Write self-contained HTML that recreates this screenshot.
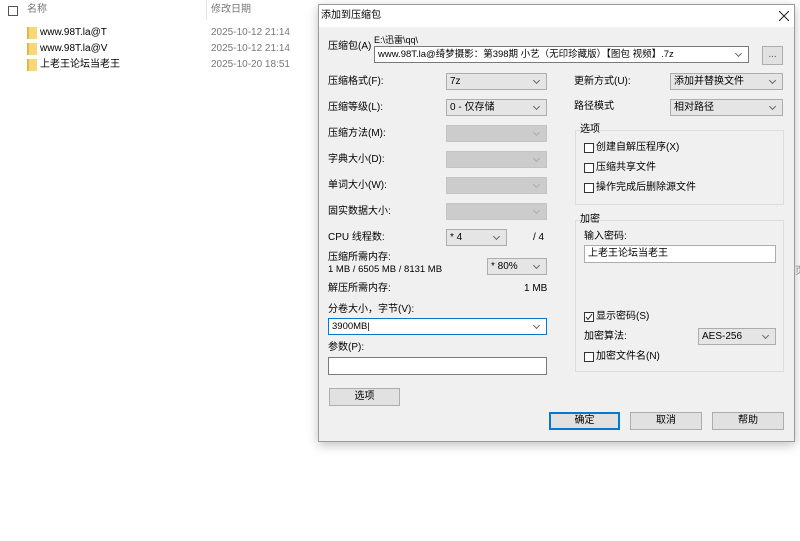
<!DOCTYPE html>
<html><head><meta charset="utf-8">
<style>
*{margin:0;padding:0;box-sizing:border-box}
body{width:800px;height:541px;background:#fff;position:relative;overflow:hidden;font-family:"Liberation Sans","Noto Sans CJK SC",sans-serif;font-size:10px;color:#000}
.a{position:absolute;white-space:nowrap;line-height:12px}
.g{color:#777}
.dlg{position:absolute;left:318px;top:4px;width:477px;height:438px;background:#f0f0f0;border:1px solid #9a9a9a;box-shadow:0 3px 10px rgba(0,0,0,.25)}
.tb{position:absolute;left:0;top:0;width:100%;height:22px;background:#fff}
.cb{position:absolute;background:#e5e5e5;border:1px solid #adadad;height:17px;line-height:15px;padding-left:3px}
.cb.d{background:#cccccc;border-color:#c4c4c4}
.cb.w{background:#fff;border-color:#7a7a7a}
.cb::after{content:"";position:absolute;right:7px;top:4px;width:4px;height:4px;border-right:1px solid #666;border-bottom:1px solid #666;transform:rotate(45deg)}
.cb.d::after{border-color:#aaa}
.in{position:absolute;background:#fff;border:1px solid #7a7a7a;height:17px;line-height:15px;padding-left:3px}
.bt{position:absolute;background:#e1e1e1;border:1px solid #adadad;height:18px;line-height:16px;text-align:center}
.grp{position:absolute;border:1px solid #dcdcdc}
.ck{position:absolute;width:10px;height:10px;border:1px solid #333;background:#fff}
.f{position:absolute;width:10px;height:12px;background:#f8d775;border-left:2px solid #e5b648}
</style></head><body>
<div class="a" style="left:8px;top:6px;width:10px;height:10px;border:1px solid #555"></div>
<div class="a g" style="left:27px;top:4px">名称</div>
<div class="a" style="left:206px;top:0;width:1px;height:20px;background:#e5e5e5"></div>
<div class="a g" style="left:211px;top:4px">修改日期</div>
<div class="f" style="left:27px;top:27px"></div>
<div class="a" style="left:40px;top:27px">www.98T.la@T</div>
<div class="a g" style="left:211px;top:27px">2025-10-12 21:14</div>
<div class="f" style="left:27px;top:43px"></div>
<div class="a" style="left:40px;top:43px">www.98T.la@V</div>
<div class="a g" style="left:211px;top:43px">2025-10-12 21:14</div>
<div class="f" style="left:27px;top:59px"></div>
<div class="a" style="left:40px;top:59px">上老王论坛当老王</div>
<div class="a g" style="left:211px;top:59px">2025-10-20 18:51</div>
<div class="a" style="left:795px;top:266px;color:#999">页</div>

<div class="dlg">
<div class="tb"></div>
<div class="a" style="left:2px;top:5px">添加到压缩包</div>
<svg class="a" style="left:460px;top:6px" width="10" height="10"><path d="M0 0L10 10M10 0L0 10" stroke="#222" stroke-width="1"/></svg>

<div class="a" style="left:9px;top:36px">压缩包(A)</div>
<div class="a" style="left:55px;top:29px;font-size:9px">E:\迅雷\qq\</div>
<div class="cb w" style="left:55px;top:41px;width:375px;font-size:9.5px">www.98T.la@绮梦摄影：第398期 小艺（无印珍藏版）【图包 视频】.7z</div>
<div class="bt" style="left:443px;top:41px;width:21px;height:19px;line-height:15px;color:#555">...</div>

<div class="a" style="left:9px;top:71px">压缩格式(F):</div>
<div class="cb" style="left:127px;top:68px;width:101px">7z</div>
<div class="a" style="left:9px;top:97px">压缩等级(L):</div>
<div class="cb" style="left:127px;top:94px;width:101px">0 - 仅存储</div>
<div class="a" style="left:9px;top:123px">压缩方法(M):</div>
<div class="cb d" style="left:127px;top:120px;width:101px"></div>
<div class="a" style="left:9px;top:149px">字典大小(D):</div>
<div class="cb d" style="left:127px;top:146px;width:101px"></div>
<div class="a" style="left:9px;top:175px">单词大小(W):</div>
<div class="cb d" style="left:127px;top:172px;width:101px"></div>
<div class="a" style="left:9px;top:201px">固实数据大小:</div>
<div class="cb d" style="left:127px;top:198px;width:101px"></div>
<div class="a" style="left:9px;top:227px">CPU 线程数:</div>
<div class="cb" style="left:127px;top:224px;width:61px">* 4</div>
<div class="a" style="left:214px;top:227px">/ 4</div>
<div class="a" style="left:9px;top:247px">压缩所需内存:</div>
<div class="a" style="left:9px;top:259px;font-size:9.5px">1 MB / 6505 MB / 8131 MB</div>
<div class="cb" style="left:168px;top:253px;width:60px">* 80%</div>
<div class="a" style="left:9px;top:278px">解压所需内存:</div>
<div class="a" style="left:205px;top:278px">1 MB</div>
<div class="a" style="left:9px;top:299px">分卷大小，字节(V):</div>
<div class="cb w" style="left:9px;top:313px;width:219px;border-color:#0078d7;font-size:9.5px">3900MB|</div>
<div class="a" style="left:9px;top:337px">参数(P):</div>
<div class="in" style="left:9px;top:352px;width:219px;height:18px"></div>
<div class="bt" style="left:10px;top:383px;width:71px">选项</div>

<div class="a" style="left:255px;top:71px">更新方式(U):</div>
<div class="cb" style="left:351px;top:68px;width:113px">添加并替换文件</div>
<div class="a" style="left:255px;top:96px">路径模式</div>
<div class="cb" style="left:351px;top:94px;width:113px">相对路径</div>

<div class="grp" style="left:256px;top:125px;width:209px;height:75px"></div>
<div class="a" style="left:261px;top:119px">选项</div>
<div class="ck" style="left:265px;top:138px"></div><div class="a" style="left:277px;top:137px">创建自解压程序(X)</div>
<div class="ck" style="left:265px;top:158px"></div><div class="a" style="left:277px;top:157px">压缩共享文件</div>
<div class="ck" style="left:265px;top:178px"></div><div class="a" style="left:277px;top:177px">操作完成后删除源文件</div>

<div class="grp" style="left:256px;top:215px;width:209px;height:152px"></div>
<div class="a" style="left:261px;top:209px">加密</div>
<div class="a" style="left:265px;top:226px">输入密码:</div>
<div class="in" style="left:265px;top:240px;width:192px;height:18px;border-color:#adadad">上老王论坛当老王</div>
<div class="ck" style="left:265px;top:307px"></div>
<svg class="a" style="left:266px;top:308px" width="8" height="8"><path d="M1 4L3 6.5L7 1" stroke="#222" stroke-width="1" fill="none"/></svg>
<div class="a" style="left:277px;top:306px">显示密码(S)</div>
<div class="a" style="left:265px;top:326px">加密算法:</div>
<div class="cb" style="left:379px;top:323px;width:78px">AES-256</div>
<div class="ck" style="left:265px;top:347px"></div><div class="a" style="left:277px;top:346px">加密文件名(N)</div>

<div class="bt" style="left:230px;top:407px;width:71px;border:1px solid #0078d7;box-shadow:inset 0 0 0 1px #0078d7">确定</div>
<div class="bt" style="left:311px;top:407px;width:72px">取消</div>
<div class="bt" style="left:393px;top:407px;width:72px">帮助</div>
</div>
</body></html>
